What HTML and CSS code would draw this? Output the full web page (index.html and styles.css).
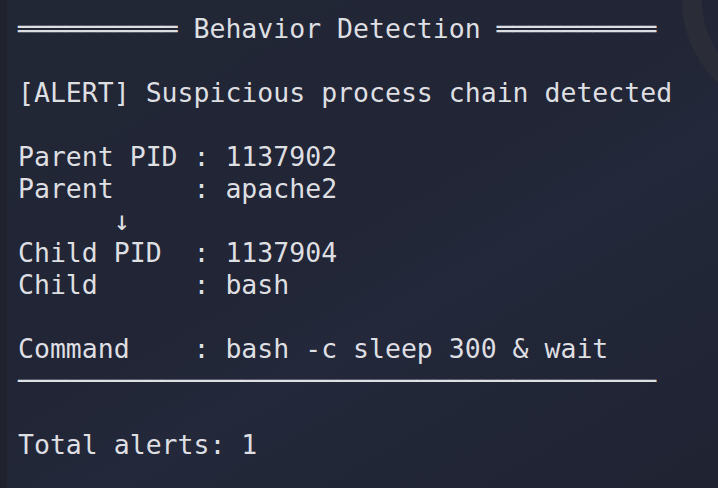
FILE: index.html
```html
<!DOCTYPE html>
<html>
<head>
<meta charset="utf-8">
<link rel="stylesheet" href="styles.css">
</head>
<body>
<div class="term">
  <div class="ring"></div>
  <div class="strip"></div>
  <div class="screen">
    <div class="line">══════════ Behavior Detection ══════════</div>
    <div class="line"> </div>
    <div class="line">[ALERT] Suspicious process chain detected</div>
    <div class="line"> </div>
    <div class="line">Parent PID : 1137902</div>
    <div class="line">Parent     : apache2</div>
    <div class="line">      <span class="arrow">↓</span></div>
    <div class="line">Child PID  : 1137904</div>
    <div class="line">Child      : bash</div>
    <div class="line"> </div>
    <div class="line">Command    : bash -c sleep 300 &amp; wait</div>
    <div class="line">────────────────────────────────────────</div>
    <div class="line"> </div>
    <div class="line">Total alerts: 1</div>
  </div>
</div>
</body>
</html>
```
FILE: styles.css
```css
html, body {
  margin: 0;
  padding: 0;
  width: 718px;
  height: 488px;
  overflow: hidden;
}
.term {
  position: relative;
  width: 718px;
  height: 488px;
  overflow: hidden;
  background:
    linear-gradient(150deg, #222736 0%, #212535 45%, #23283a 60%, #1f2332 100%);
}
.strip {
  position: absolute;
  left: 0;
  top: 0;
  width: 7px;
  height: 488px;
  background: #1f222d;
}
.ring {
  position: absolute;
  left: 682px;
  top: -114px;
  width: 188px;
  height: 188px;
  border: 20px solid #2a2d38;
  border-radius: 50%;
}
.screen {
  position: relative;
  padding: 13px 0 0 18px;
  font-family: "DejaVu Sans Mono", monospace;
  font-size: 26.5px;
  line-height: 32px;
  color: #dedfe2;
}
.line {
  white-space: pre;
  height: 32px;
}
.arrow {
  display: inline-block;
  width: 16px;
  height: 32px;
  text-align: center;
  font-size: 27px;
  line-height: 32px;
  vertical-align: top;
}
```
